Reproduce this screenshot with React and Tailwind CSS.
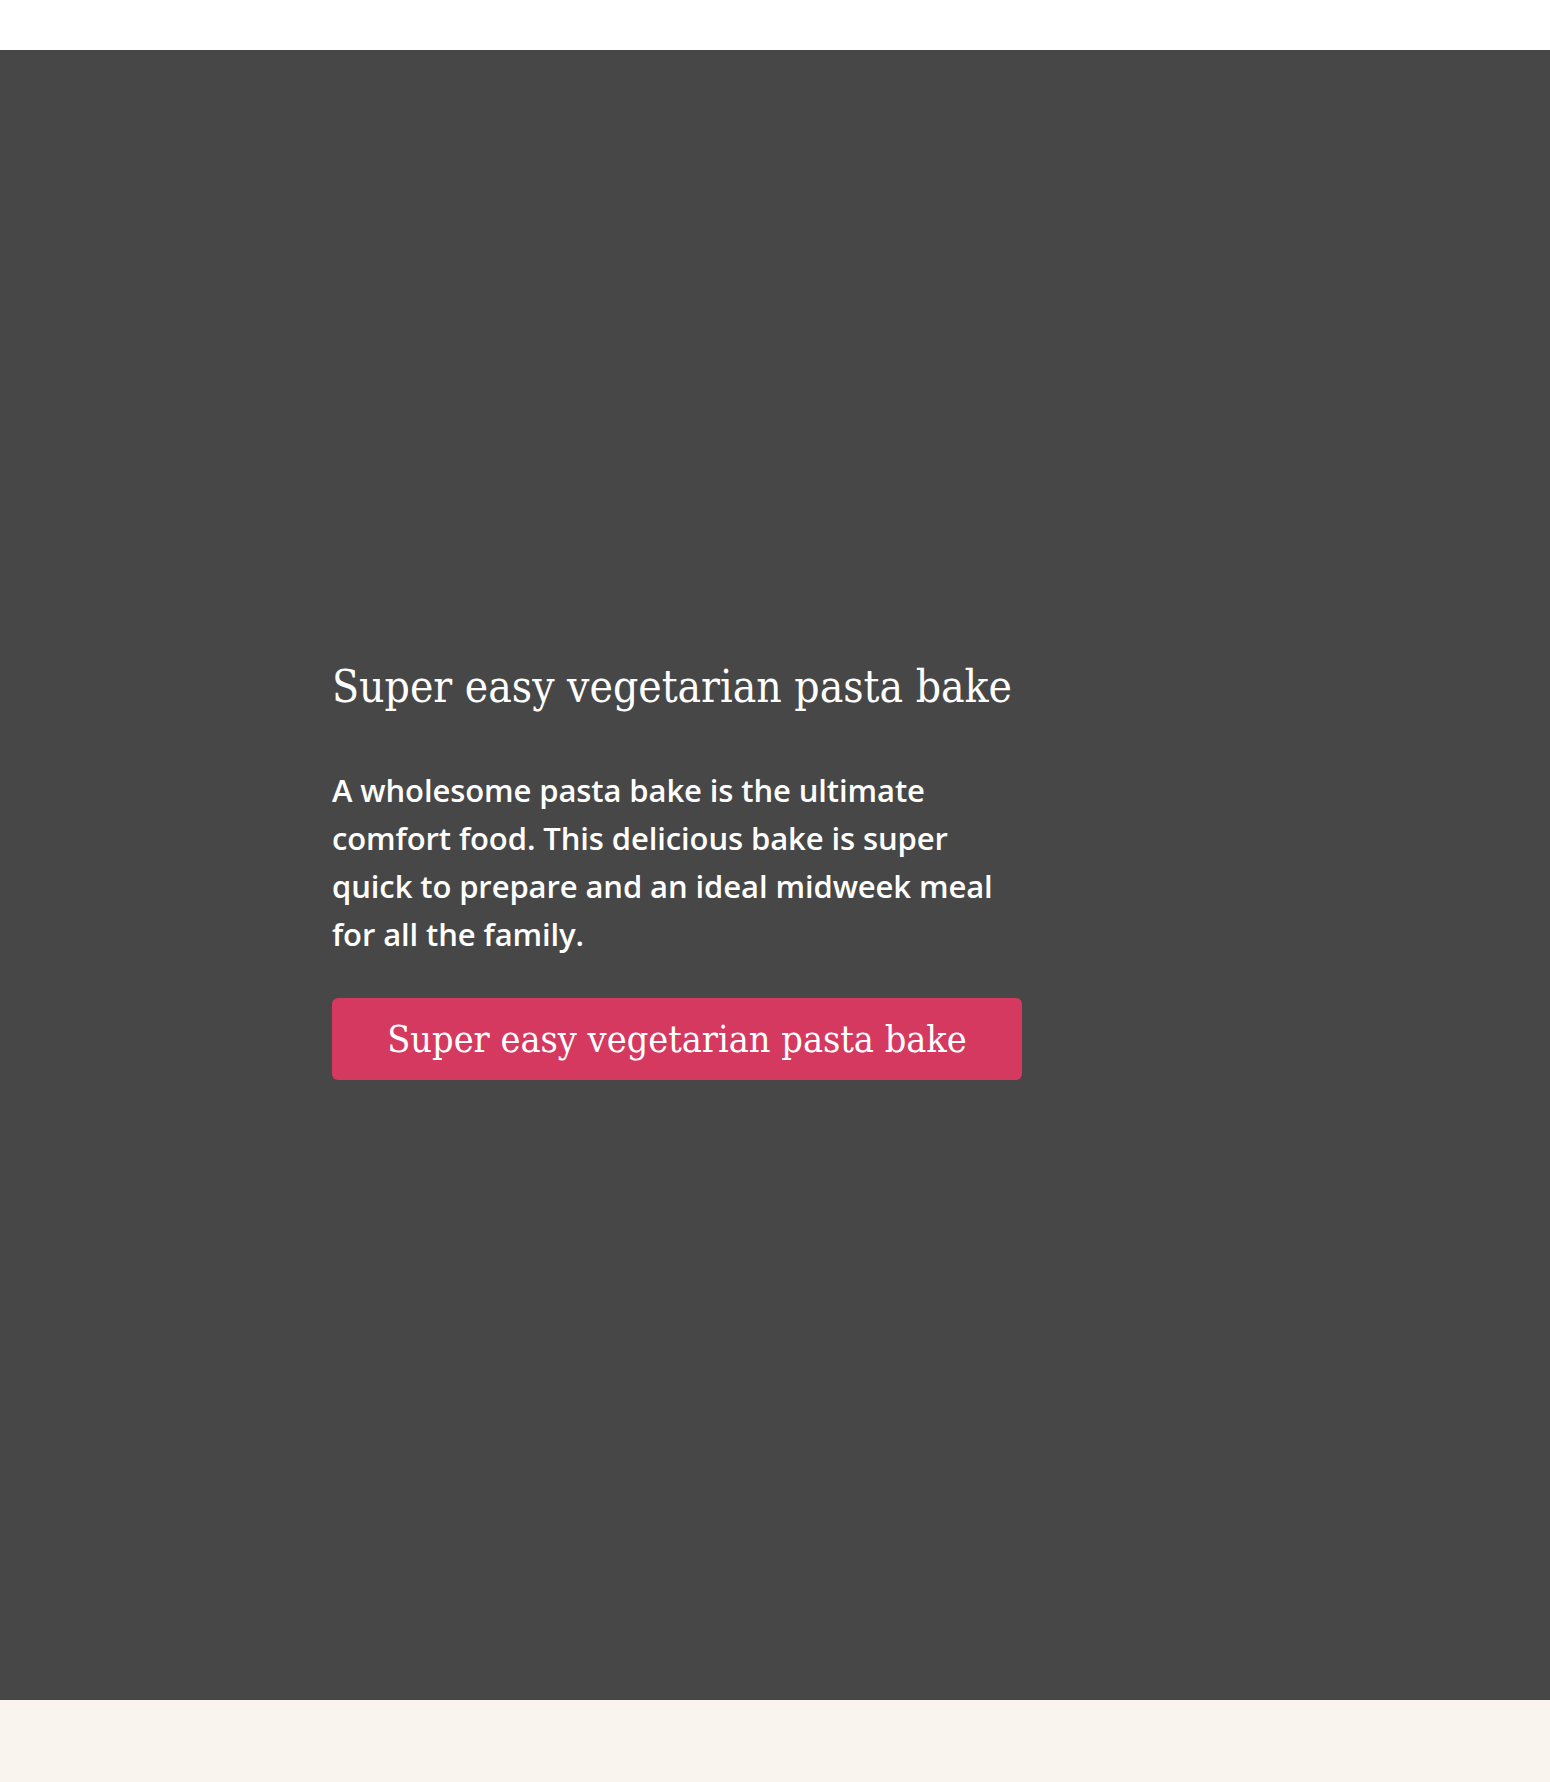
export default function App() {
  return (
    <div className="min-h-[1782px] bg-white flex flex-col">
      <div className="h-[50px] bg-white" />
      <section className="h-[1650px] bg-[#474747] flex items-center pl-[332px] pb-[11px]">
        <div className="w-[690px] flex flex-col">
          <h2
            className="text-[44px] leading-[56px] text-white font-normal font-stretch-condensed"
            style={{ fontFamily: '"DejaVu Serif Condensed", "DejaVu Serif", serif' }}
          >
            Super easy vegetarian pasta bake
          </h2>
          <p
            className="mt-[51px] w-[672px] text-[31px] leading-[48px] tracking-[-0.1px] text-white font-semibold"
            style={{ fontFamily: '"Open Sans", sans-serif' }}
          >
            A wholesome pasta bake is the ultimate comfort food. This delicious bake is super quick to prepare and an ideal midweek meal for all the family.
          </p>
          <button
            className="mt-[40px] h-[82px] w-[690px] rounded-md bg-[#d6395f] text-white text-[37.5px] font-stretch-condensed"
            style={{ fontFamily: '"DejaVu Serif Condensed", "DejaVu Serif", serif' }}
          >
            Super easy vegetarian pasta bake
          </button>
        </div>
      </section>
      <div className="flex-1 bg-[#f9f4ee]" />
    </div>
  );
}
